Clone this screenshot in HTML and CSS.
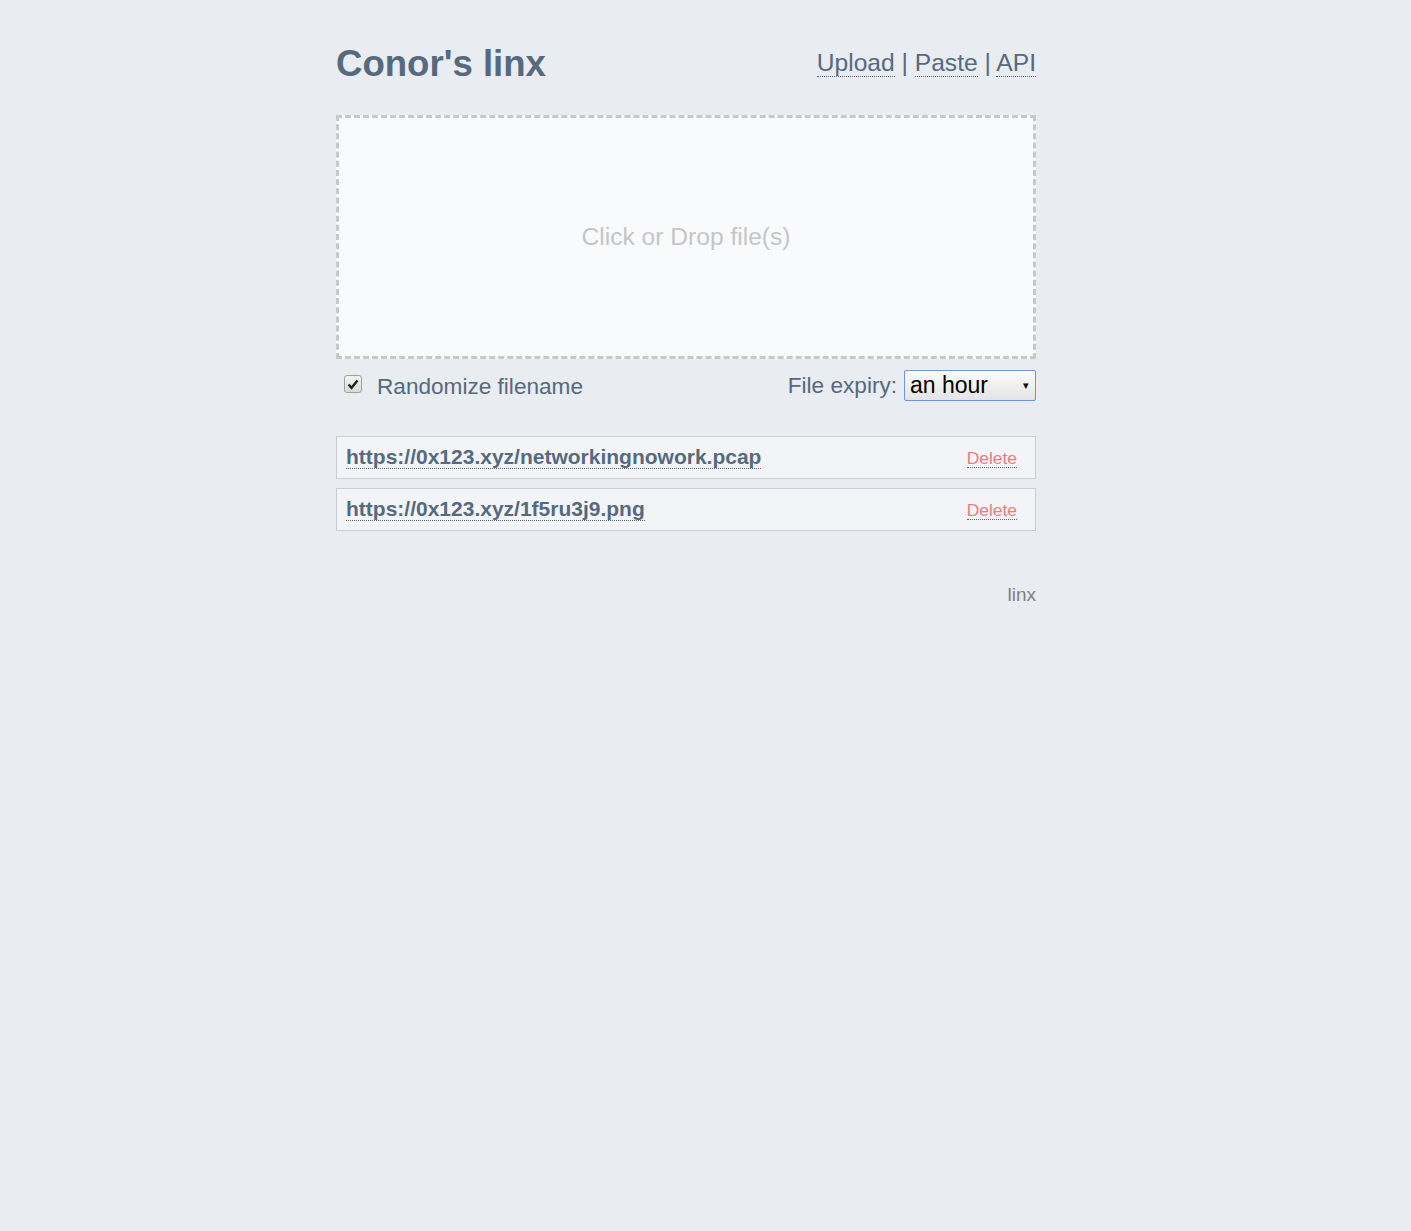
FILE: index.html
```html
<!DOCTYPE html>
<html>
<head>
<meta charset="utf-8">
<link rel="stylesheet" href="styles.css">
</head>
<body>
<div class="container">
  <header class="header">
    <h1 class="title">Conor's linx</h1>
    <nav class="nav"><a href="#">Upload</a> | <a href="#">Paste</a> | <a href="#">API</a></nav>
  </header>
  <div class="dropzone">Click or Drop file(s)</div>
  <div class="options">
    <label class="random"><span class="cb"><svg width="12" height="11" viewBox="0 0 12 11"><path d="M1.5 5.5 L4.5 8.8 L10.5 1.5" fill="none" stroke="#222" stroke-width="2.4"/></svg></span>Randomize filename</label>
    <div class="expiry">File expiry: <span class="select">an hour<span class="arrow">&#9662;</span></span></div>
  </div>
  <div class="results">
    <div class="result"><a class="link" href="#">https://0x123.xyz/networkingnowork.pcap</a><a class="del" href="#">Delete</a></div>
    <div class="result"><a class="link" href="#">https://0x123.xyz/1f5ru3j9.png</a><a class="del" href="#">Delete</a></div>
  </div>
  <footer class="footer">linx</footer>
</div>
</body>
</html>
```
FILE: styles.css
```css
html, body { margin: 0; padding: 0; }
body {
  background: #e9ecf0;
  font-family: "Liberation Sans", Arial, sans-serif;
  color: #556a7f;
  min-height: 1231px;
}
.container {
  width: 700px;
  margin-left: 336px;
  padding-top: 40px;
}
.header {
  display: flex;
  justify-content: space-between;
  align-items: flex-end;
  height: 47px;
}
.title {
  margin: 0;
  font-size: 36.6px;
  font-weight: bold;
  line-height: 44px;
  color: #556a7f;
  padding-bottom: 1px;
}
.nav {
  font-size: 24.6px;
  line-height: 30px;
  padding-bottom: 9px;
}
.nav a {
  color: #556a7f;
  text-decoration: none;
  border-bottom: 1px dotted #556a7f;
}
.dropzone {
  margin-top: 28px;
  height: 238px;
  border: 3px dashed #c8c8c8;
  background: #f9fafc;
  display: flex;
  align-items: center;
  justify-content: center;
  font-size: 24.6px;
  color: #c5c5c5;
}
.options {
  display: flex;
  justify-content: space-between;
  align-items: center;
  margin-top: 10px;
  height: 33px;
  font-size: 22.6px;
}
.random {
  display: flex;
  align-items: center;
  padding-left: 8px;
  padding-top: 3px;
}
.cb {
  width: 16px;
  height: 16px;
  border: 1px solid #a0a0a0;
  border-radius: 3px;
  background: linear-gradient(#f4f4f4, #dadada);
  display: flex;
  align-items: center;
  justify-content: center;
  margin-right: 15px;
  margin-top: -6px;
}
.expiry {
  display: flex;
  align-items: center;
}
.select {
  margin-left: 7px;
  width: 119px;
  height: 29px;
  border: 1px solid #6c94e0;
  border-radius: 2px;
  background: linear-gradient(#fbfbfb, #e4e4e4);
  color: #000;
  display: flex;
  align-items: center;
  justify-content: space-between;
  padding: 0 6px 0 5px;
  font-size: 23px;
}
.arrow { font-size: 11px; }
.results {
  margin-top: 34px;
  display: flex;
  flex-direction: column;
  gap: 9px;
}
.result {
  height: 41px;
  border: 1px solid #cdcdcd;
  background: #f3f4f7;
  display: flex;
  align-items: center;
  justify-content: space-between;
  padding: 0 18px 0 9px;
}
.link {
  font-size: 21px;
  font-weight: bold;
  color: #556a7f;
  text-decoration: none;
  border-bottom: 1px dotted #556a7f;
  line-height: 22px;
}
.del {
  font-size: 17.4px;
  color: #ed7c7c;
  text-decoration: none;
  border-bottom: 1px dotted #556a7f;
  line-height: 17px;
  margin-top: 3px;
}
.footer {
  text-align: right;
  margin-top: 53px;
  font-size: 19px;
  color: #808080;
}
```
